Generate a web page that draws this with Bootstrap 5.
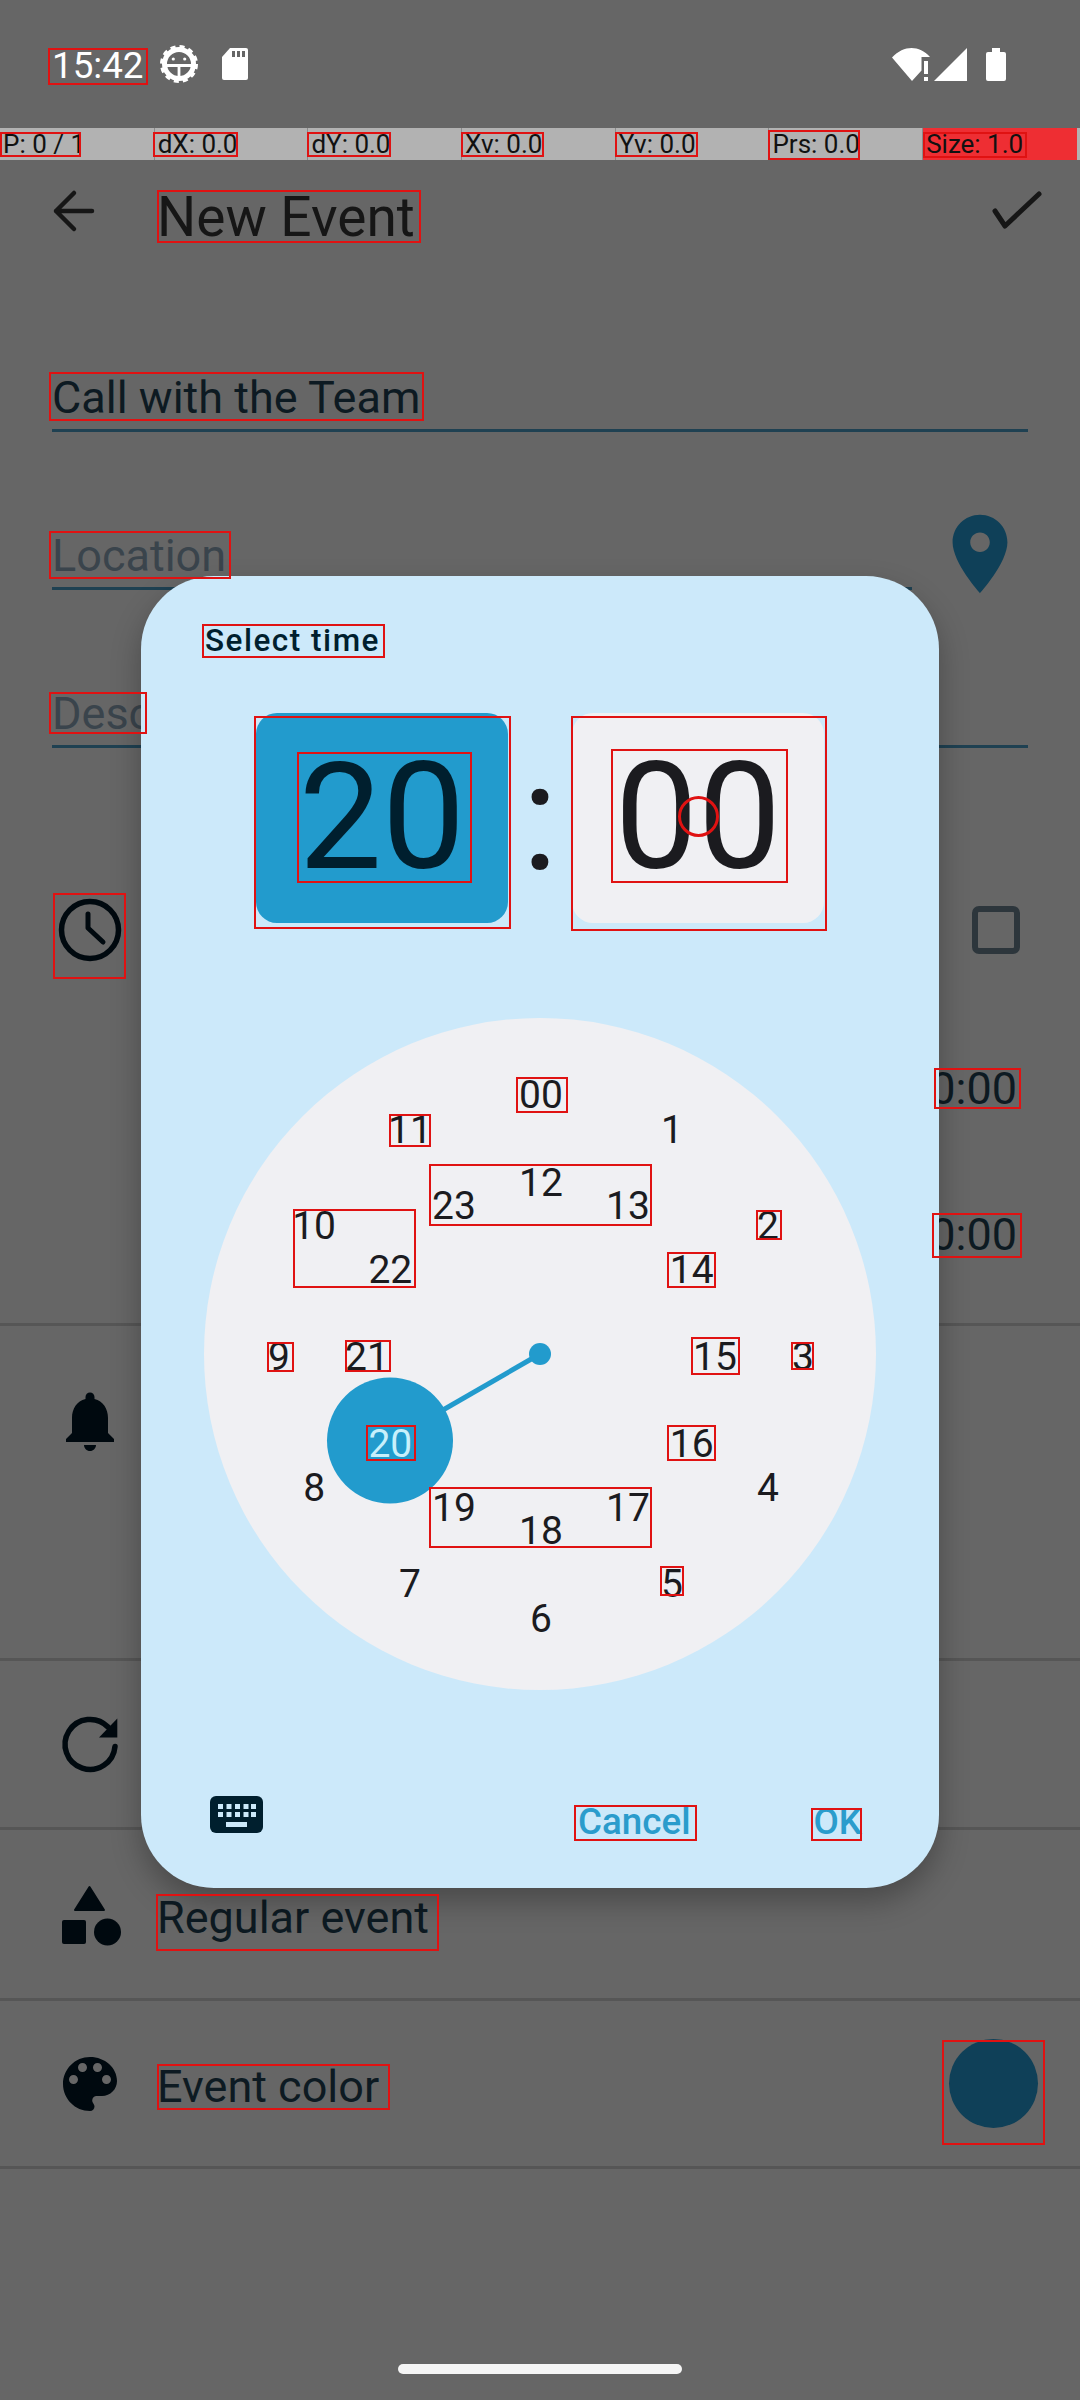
<!doctype html>
<html lang="en">
<head>
  <meta charset="utf-8" />
  <meta name="viewport" content="width=device-width, initial-scale=1" />
  <title>New Event</title>
  <link href="https://cdn.jsdelivr.net/npm/bootstrap@5.3.0/dist/css/bootstrap.min.css" rel="stylesheet" />
  <style>
    body {
      font-family: Roboto, "Liberation Sans", sans-serif;
      margin: 0;
      background-color: #666;
    }
    .ev-screen {
      position: relative;
      width: 1080px;
      height: 2400px;
      overflow: hidden;
      background-color: #666;
      color: #0d1a22;
    }
    .ev-status {
      height: 128px;
      padding: 0 74px 0 52px;
      color: #fff;
      font-size: 36.75px;
    }
    .ev-clock-text { padding-top: 3px; }
    .ev-debug {
      display: grid;
      grid-template-columns: repeat(6, 153.7px) 1fr;
      height: 32px;
      background-color: #b2b2b2;
      color: #111;
      font-size: 26px;
      line-height: 32px;
    }
    .ev-debug > div {
      padding-left: 3px;
      border-left: 1px solid #8a8a8a;
      white-space: nowrap;
    }
    .ev-debug > div:first-child { border-left: 0; }
    .ev-debug .ev-debug-hot { background-color: #ee2e33; margin-right: 3px; }
    .ev-toolbar { height: 114px; color: #161616; }
    .ev-toolbar svg { margin-bottom: 12px; }
    .ev-title { font-size: 55px; line-height: 1.2; }
    .ev-form { height: 539px; }
    .ev-field {
      height: 158px;
      margin-left: 52px;
      padding-bottom: 4px;
      border-bottom: 3px solid #1f4152;
      font-size: 45px;
      line-height: 1.2;
      display: flex;
      align-items: flex-end;
      overflow: hidden;
      white-space: nowrap;
    }
    .ev-hint { color: #3a444c; }
    .ev-field-loc { width: 860px; flex: none; }
    .ev-field-desc { margin-right: 52px; }
    .ev-pin { margin: 0 0 -11px 21px; align-self: flex-end; }
    .ev-sect { border-bottom: 3px solid #565656; font-size: 45px; }
    .ev-ic { flex: none; margin: 0 19px 0 42px; }
    .ev-label { padding-top: 7px; }
    .ev-sect-time { height: 513px; }
    .ev-time-top { height: 234px; margin-bottom: 1px; }
    .ev-check { margin-left: auto; margin-right: 60px; }
    .ev-time-val { height: 82px; line-height: 82px; font-size: 45px; text-align: right; padding-right: 63px; }
    .ev-time-val + .ev-time-val { margin-top: 64px; }
    .ev-sect-remind { height: 335px; padding-top: 47px; }
    .ev-sect-repeat { height: 169px; }
    .ev-sect-type { height: 171px; }
    .ev-sect-color { height: 168px; }
    .ev-swatch {
      width: 89px;
      height: 89px;
      margin-left: auto;
      margin-right: 42px;
      border-radius: 50%;
      background-color: #0f4058;
    }
    .ev-home {
      width: 284px;
      height: 10px;
      margin: 195px auto 0;
      border-radius: 5px;
      background-color: #f5f5f5;
    }
    .ev-dialog {
      position: absolute;
      left: 141px;
      top: 576px;
      width: 798px;
      height: 1312px;
      border-radius: 73px;
      background-color: #cce9fa;
      box-shadow: 0 14px 30px rgba(0, 0, 0, .28);
    }
    .ev-dialog-title {
      margin: 49px 0 0 64px;
      height: 32px;
      line-height: 32px;
      font-size: 31.5px;
      font-weight: 500;
      letter-spacing: 1.5px;
      color: #001f2e;
    }
    .ev-clock-row { margin-top: 56px; height: 210px; }
    .ev-clock-box {
      width: 252px;
      height: 210px;
      border-radius: 21px;
      font-size: 148px;
      line-height: 1;
    }
    .ev-clock-hour { background-color: #229bcd; color: #001f2e; }
    .ev-clock-min { background-color: #f0f0f3; color: #1b1b1f; }
    .ev-clock-sep { width: 64px; text-align: center; font-size: 150px; line-height: 1; color: #1b1b1f; }
    .ev-dial {
      position: relative;
      width: 672px;
      height: 672px;
      margin: 95px auto 0;
      border-radius: 50%;
      background-color: #f0f0f3;
    }
    .ev-dial svg { position: absolute; left: 0; top: 0; }
    .ev-num {
      position: absolute;
      transform: translate(-50%, -50%);
      font-size: 39px;
      line-height: 1;
      color: #1b1b1f;
    }
    .ev-num-on { color: #c8f0fb; }
    .ev-foot { padding: 0 0 0 69px; margin-top: 106px; }
    .ev-foot .btn {
      padding: 0;
      margin-top: 8px;
      border: 0;
      font-size: 36.75px;
      font-weight: 500;
      line-height: 1;
      color: #2a9ccc;
    }
    .ev-foot .ev-cancel { margin-left: 315px; }
    .ev-foot .ev-ok { margin-left: 123px; }
    .ev-box {
      position: absolute;
      border: 2px solid #e01212;
    }
    .ev-box-round { border-radius: 50%; border-width: 3px; }
  </style>
</head>
<body>
  <div class="ev-screen" id="screen">

    <div class="ev-status d-flex align-items-center">
      <span class="ev-clock-text">15:42</span>
      <svg class="ms-3" width="38" height="38" viewBox="-19 -19 38 38" aria-hidden="true">
        <circle r="14.500" fill="none" stroke="#fff" stroke-width="5"/>
        <circle r="17.300" fill="none" stroke="#fff" stroke-width="3.400" stroke-dasharray="5 4.060"/>
        <rect x="-13" y="0" width="26" height="3" fill="#fff"/>
        <rect x="-1.400" y="0" width="2.800" height="13" fill="#fff"/>
        <circle cx="-5.700" cy="-5" r="1.600" fill="#fff"/>
        <circle cx="5.700" cy="-5" r="1.600" fill="#fff"/>
      </svg>
      <svg class="ms-4" width="26" height="32" viewBox="0 0 26 32" aria-hidden="true">
        <path d="M8 0H24a2 2 0 0 1 2 2V30a2 2 0 0 1-2 2H2a2 2 0 0 1-2-2V9z" fill="#fff"/>
        <path d="M10 3h3v6h-3zM15 3h3v6h-3zM20 3h3v6h-3z" fill="#666"/>
      </svg>
      <svg class="ms-auto" width="38" height="33" viewBox="0 0 38 33" aria-hidden="true">
        <path d="M20 33 0 9.500C12-3 27-3 38 9H29.500V22.500Z" fill="#fff"/>
        <path d="M32 13h4v13h-4zM32 29h4v4h-4z" fill="#fff"/>
      </svg>
      <svg class="ms-1" width="33" height="33" viewBox="0 0 33 33" aria-hidden="true">
        <path d="M0 33 33 0V33Z" fill="#fff"/>
      </svg>
      <svg style="margin-left:19px" width="20" height="33" viewBox="0 0 20 33" aria-hidden="true">
        <path d="M6 0h8v4h4a2 2 0 0 1 2 2V31a2 2 0 0 1-2 2H2a2 2 0 0 1-2-2V6a2 2 0 0 1 2-2h4z" fill="#fff"/>
      </svg>
    </div>

    <div class="ev-debug">
      <div>P: 0 / 1</div>
      <div>dX: 0.0</div>
      <div>dY: 0.0</div>
      <div>Xv: 0.0</div>
      <div>Yv: 0.0</div>
      <div>Prs: 0.0</div>
      <div class="ev-debug-hot">Size: 1.0</div>
    </div>

    <div class="ev-toolbar d-flex align-items-center">
      <svg style="margin-left:44px;margin-right:53px" width="60" height="60" viewBox="0 0 60 60" aria-hidden="true">
        <path d="M48 30H12M30 12 12 30 30 48" fill="none" stroke="#161616" stroke-width="4.500" stroke-linecap="round" stroke-linejoin="round"/>
      </svg>
      <span class="ev-title">New Event</span>
      <svg class="ms-auto" style="margin-right:38px" width="50" height="40" viewBox="0 0 50 40" aria-hidden="true">
        <path d="M3 20 13 35 47 3" fill="none" stroke="#161616" stroke-width="5" stroke-linecap="round" stroke-linejoin="round"/>
      </svg>
    </div>

    <div class="ev-form">
      <div class="ev-field ev-field-desc">Call with the Team</div>
      <div class="d-flex">
        <div class="ev-field ev-field-loc ev-hint">Location</div>
        <svg class="ev-pin" width="94" height="94" viewBox="0 0 24 24" aria-hidden="true">
          <path d="M12 2C8.130 2 5 5.130 5 9c0 5.250 7 13 7 13s7-7.750 7-13c0-3.870-3.130-7-7-7zm0 9.500c-1.380 0-2.500-1.120-2.500-2.500s1.120-2.500 2.500-2.500 2.500 1.120 2.500 2.500-1.120 2.500-2.500 2.500z" fill="#0f4058"/>
        </svg>
      </div>
      <div class="ev-field ev-field-desc ev-hint">Description</div>
    </div>

    <div class="ev-sect ev-sect-time">
      <div class="ev-time-top d-flex align-items-center">
        <svg class="ev-ic" width="96" height="96" viewBox="0 0 96 96" aria-hidden="true">
          <circle cx="48" cy="48" r="28.500" fill="none" stroke="#00090f" stroke-width="5.500"/>
          <path d="M46 32V46L61 60" fill="none" stroke="#00090f" stroke-width="5" stroke-linecap="round" stroke-linejoin="round"/>
        </svg>
        <svg class="ev-check" width="48" height="48" viewBox="0 0 48 48" aria-hidden="true">
          <rect x="3" y="3" width="42" height="42" rx="4" fill="none" stroke="#2d363c" stroke-width="6"/>
        </svg>
      </div>
      <div class="ev-time-val">20:00</div>
      <div class="ev-time-val">20:00</div>
    </div>

    <div class="ev-sect ev-sect-remind d-flex align-items-start">
      <svg class="ev-ic" width="96" height="96" viewBox="-4 -4 32 32" aria-hidden="true">
        <path d="M12 22c1.100 0 2-.9 2-2h-4c0 1.100.89 2 2 2zm6-6v-5c0-3.070-1.640-5.640-4.500-6.320V4c0-.83-.67-1.500-1.500-1.500s-1.500.67-1.500 1.500v.68C7.630 5.360 6 7.920 6 11v5l-2 2v1h16v-1l-2-2z" fill="#00090f"/>
      </svg>
    </div>

    <div class="ev-sect ev-sect-repeat d-flex align-items-center">
      <svg class="ev-ic" width="96" height="96" viewBox="0 0 96 96" aria-hidden="true">
        <path d="M73 50.500A25 25 0 1 1 66 31" fill="none" stroke="#00090f" stroke-width="5.500" stroke-linecap="round"/>
        <path d="M75.300 22.500V41.500H57Z" fill="#00090f"/>
      </svg>
    </div>

    <div class="ev-sect ev-sect-type d-flex align-items-center">
      <svg class="ev-ic" width="96" height="96" viewBox="0 0 96 96" aria-hidden="true">
        <path d="M47.500 21 62 44H33Z" fill="#00090f" stroke="#00090f" stroke-width="2" stroke-linejoin="round"/>
        <rect x="20" y="54" width="24" height="24" rx="2" fill="#00090f"/>
        <circle cx="65.500" cy="66" r="13.500" fill="#00090f"/>
      </svg>
      <span class="ev-label">Regular event</span>
    </div>

    <div class="ev-sect ev-sect-color d-flex align-items-center">
      <svg class="ev-ic" width="96" height="96" viewBox="-4 -4 32 32" aria-hidden="true">
        <path d="M12 3c-4.970 0-9 4.030-9 9s4.030 9 9 9c.83 0 1.500-.67 1.500-1.500 0-.39-.15-.74-.39-1.010-.23-.26-.38-.61-.38-.99 0-.83.67-1.500 1.500-1.500H16c2.760 0 5-2.240 5-5 0-4.420-4.030-8-9-8zm-5.500 9c-.83 0-1.500-.67-1.500-1.500S5.670 9 6.500 9 8 9.670 8 10.500 7.330 12 6.500 12zm3-4C8.670 8 8 7.330 8 6.500S8.670 5 9.500 5s1.500.67 1.500 1.500S10.330 8 9.500 8zm5 0c-.83 0-1.500-.67-1.500-1.500S13.670 5 14.500 5s1.500.67 1.500 1.500S15.330 8 14.500 8zm3 4c-.83 0-1.500-.67-1.500-1.500S16.670 9 17.500 9s1.500.67 1.500 1.500-.67 1.500-1.500 1.500z" fill="#00090f"/>
      </svg>
      <span class="ev-label">Event color</span>
      <div class="ev-swatch"></div>
    </div>

    <div class="ev-home"></div>

    <div class="ev-dialog d-flex flex-column">
      <div class="ev-dialog-title">Select time</div>
      <div class="ev-clock-row d-flex justify-content-center">
        <div class="ev-clock-box ev-clock-hour d-flex align-items-center justify-content-center">20</div>
        <div class="ev-clock-sep d-flex align-items-center justify-content-center">:</div>
        <div class="ev-clock-box ev-clock-min d-flex align-items-center justify-content-center">00</div>
      </div>
      <div class="ev-dial" id="dial">
        <svg width="672" height="672" viewBox="0 0 672 672" aria-hidden="true">
          <line x1="336" y1="336" x2="186" y2="422.500" stroke="#229bcd" stroke-width="5"/>
          <circle cx="336" cy="336" r="11" fill="#229bcd"/>
          <circle cx="186" cy="422.500" r="63" fill="#229bcd"/>
        </svg>
      </div>
      <div class="ev-foot d-flex align-items-start">
        <svg width="53" height="37" viewBox="0 0 53 37" aria-hidden="true">
          <rect width="53" height="37" rx="6" fill="#001f2e"/>
          <path d="M8 8h5v5H8zM16.500 8h5v5h-5zM25 8h5v5h-5zM33.500 8h5v5h-5zM41 8h5v5h-5zM8 16h5v5H8zM16.500 16h5v5h-5zM25 16h5v5h-5zM33.500 16h5v5h-5zM41 16h5v5h-5zM16 26h21v5H16z" fill="#cce9fa"/>
        </svg>
        <button type="button" class="btn ev-cancel">Cancel</button>
        <button type="button" class="btn ev-ok">OK</button>
      </div>
    </div>
  </div>

  <script>
    // dial labels: outer ring 1-12 (00 on top), inner ring 12-23
    var dial = document.getElementById('dial');
    var cx = 337, cy = 339;
    function addNum(text, ang, r, on) {
      var el = document.createElement('span');
      el.className = 'ev-num' + (on ? ' ev-num-on' : '');
      el.textContent = text;
      el.style.left = (cx + r * Math.sin(ang)) + 'px';
      el.style.top = (cy - r * Math.cos(ang)) + 'px';
      dial.appendChild(el);
    }
    for (var h = 0; h < 12; h++) {
      var a = h * Math.PI / 6;
      addNum(h === 0 ? '00' : String(h), a, 262, false);
      addNum(String(h + 12), a, 174, h + 12 === 20);
    }

    // debug overlay rectangles, x1 y1 x2 y2 on the screen
    var boxes = [
      [48, 48, 148, 85], [0, 132, 81, 157], [153, 132, 238, 157], [307, 132, 391, 157],
      [461, 132, 544, 157], [615, 132, 698, 157], [768, 130, 860, 160], [923, 132, 1027, 158],
      [157, 190, 421, 243], [49, 372, 424, 421], [49, 531, 231, 579], [49, 692, 147, 734],
      [53, 893, 126, 979], [934, 1068, 1021, 1109], [932, 1213, 1022, 1258],
      [202, 624, 385, 658], [254, 716, 511, 929], [297, 752, 472, 883],
      [571, 716, 827, 931], [611, 749, 788, 883],
      [516, 1077, 568, 1113], [389, 1114, 431, 1147], [429, 1164, 652, 1226], [293, 1209, 416, 1288],
      [756, 1210, 782, 1240], [667, 1252, 716, 1288], [267, 1342, 294, 1372], [345, 1340, 391, 1372],
      [691, 1337, 740, 1375], [791, 1342, 814, 1370], [366, 1425, 416, 1461], [667, 1425, 716, 1461],
      [429, 1487, 652, 1548], [660, 1566, 684, 1596],
      [574, 1805, 697, 1841], [811, 1808, 862, 1841],
      [156, 1894, 439, 1951], [157, 2064, 390, 2110], [942, 2040, 1045, 2145]
    ];
    var screen = document.getElementById('screen');
    function addBox(b, round) {
      var el = document.createElement('div');
      el.className = 'ev-box' + (round ? ' ev-box-round' : '');
      el.style.left = b[0] + 'px';
      el.style.top = b[1] + 'px';
      el.style.width = (b[2] - b[0]) + 'px';
      el.style.height = (b[3] - b[1]) + 'px';
      screen.appendChild(el);
    }
    boxes.forEach(function (b) { addBox(b, false); });
    addBox([678, 796, 719, 837], true);
  </script>
  <script src="https://cdn.jsdelivr.net/npm/bootstrap@5.3.0/dist/js/bootstrap.bundle.min.js"></script>
</body>
</html>
